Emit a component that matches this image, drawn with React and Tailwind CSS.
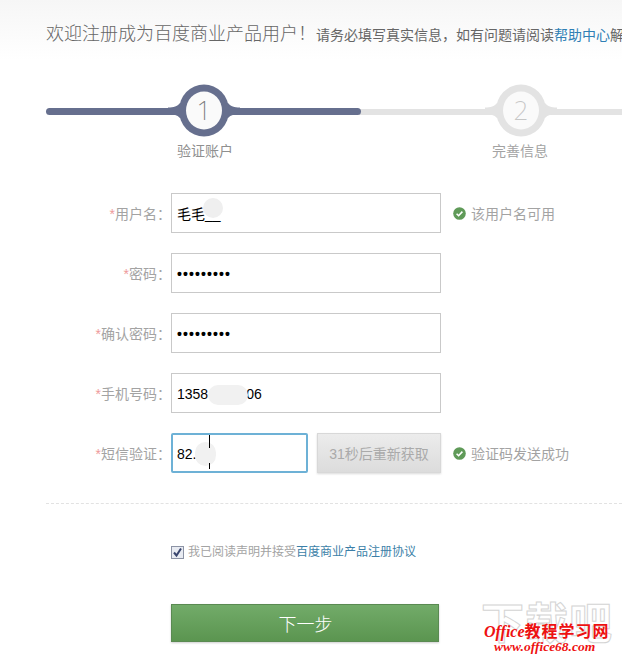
const cjk = { fontFamily: '"Liberation Sans","Noto Sans CJK SC",sans-serif' };
const latin = { fontFamily: '"Liberation Sans",sans-serif' };
const serif = { fontFamily: '"Liberation Serif",serif' };

function Check() {
  return (
    <svg width="13" height="13" viewBox="0 0 13 13" className="shrink-0">
      <circle cx="6.5" cy="6.5" r="6.3" fill="#5f9a58" />
      <path d="M3.6 6.7 5.6 8.7 9.4 4.6" fill="none" stroke="#fff" strokeWidth="1.6" />
    </svg>
  );
}

function Node({ n, color, text, left }) {
  return (
    <div className="absolute top-[-2px] w-[80px] h-[54px] flex items-center justify-center" style={{ left }}>
      <svg width="80" height="54" viewBox="0 0 80 54" className="absolute inset-0">
        <path d="M4 24.5 C 10 24.5 13 23.5 16 20 L 64 20 C 67 23.5 70 24.5 76 24.5 L 76 31 C 70 31 67 32 64 35 L 16 35 C 13 32 10 31 4 31 Z" fill={color} />
        <ellipse cx="40" cy="27.5" rx="25" ry="26" fill={color} />
        <ellipse cx="40" cy="27.5" rx="18" ry="19" fill="#fafafa" />
      </svg>
      <span className="relative text-[26px] font-extralight" style={{ color: text, fontFamily: '"Noto Sans",sans-serif' }}>{n}</span>
    </div>
  );
}

function Row({ label, children, note, mb = "mb-5" }) {
  return (
    <div className={`flex items-center h-10 ${mb}`}>
      <div className="w-[171px] shrink-0 pt-[2px] text-right text-[14px] text-[#a3a3a3] whitespace-nowrap">
        <span className="text-[#ee9a9a]">*</span>{label}：
      </div>
      <div className="flex items-center">{children}</div>
      {note && (
        <div className="ml-3 pt-[1px] flex items-center gap-[5px] text-[14px] text-[#a3a3a3] whitespace-nowrap">
          <Check /><span className="pt-px">{note}</span>
        </div>
      )}
    </div>
  );
}

function Field({ children, className = "w-[270px] border-[#c9c9c9]" }) {
  return (
    <div className={`relative h-10 border bg-white flex items-center pl-[5px] pt-[2px] text-[14px] text-black overflow-hidden ${className}`}>
      {children}
    </div>
  );
}

function Dots() {
  return <span className="text-[14px] tracking-[1.1px] font-bold" style={latin}>•••••••••</span>;
}

export default function App() {
  return (
    <div className="relative w-[622px] h-[661px] overflow-hidden bg-white bg-gradient-to-b from-[#f6f6f6] to-white to-[60px]" style={cjk}>
      <div className="pl-[46px] pt-[22px] h-[85px] flex items-baseline whitespace-nowrap overflow-hidden">
        <span className="text-[18px] leading-[24px] text-[#666] font-light">欢迎注册成为百度商业产品用户！</span>
        <span className="text-[14px] text-[#666]">请务必填写真实信息，如有问题请阅读<span className="text-[#2f7fb5]">帮助中心</span>解决</span>
      </div>

      <div className="relative h-[50px] ml-[46px]">
        <div className="flex items-center h-[50px] pt-[3px]">
          <div className="w-[315px] h-[7px] rounded-full bg-[#666f8e] relative z-10"></div>
          <div className="flex-1 h-[6px] bg-[#e3e3e3] -ml-1"></div>
        </div>
        <div className="absolute inset-0 z-20">
          <Node n="1" color="#666f8e" text="#7b7b7b" left={118} />
          <Node n="2" color="#e3e3e3" text="#c6c6c6" left={435} />
        </div>
      </div>

      <div className="relative h-[58px] text-[14px]">
        <span className="absolute left-[177px] top-[6px] text-[#8f8f8f]">验证账户</span>
        <span className="absolute left-[492px] top-[6px] text-[#a3a3a3]">完善信息</span>
      </div>

      <Row label="用户名" note="该用户名可用">
        <Field>
          <span>毛毛__</span>
          <div className="absolute left-[31px] top-[4px] w-5 h-5 rounded-full bg-[#efefef]"></div>
        </Field>
      </Row>
      <Row label="密码"><Field><Dots /></Field></Row>
      <Row label="确认密码"><Field><Dots /></Field></Row>
      <Row label="手机号码">
        <Field>
          <span style={latin}>1358</span>
          <span className="ml-[38px]" style={latin}>06</span>
          <div className="absolute left-[36px] top-[11px] w-[40px] h-[20px] rounded-full bg-[#f1f1f1]"></div>
        </Field>
      </Row>
      <Row label="短信验证" note="验证码发送成功" mb="mb-0">
        <Field className="w-[137px] h-10 border-2 border-[#6db1d6] rounded-[2px] !pl-1">
          <span style={latin}>82.</span>
          <div className="absolute left-[22px] top-[7px] w-[21px] h-[24px] rounded-full bg-[#f1f1f1]"></div>
          <div className="absolute left-[36px] top-0 w-px h-[13px] bg-black"></div>
          <div className="absolute left-[36px] top-[28px] w-px h-[6px] bg-black"></div>
        </Field>
        <div className="ml-[9px] w-[124px] h-10 pt-[2px] flex items-center justify-center border border-[#d8d8d8] bg-gradient-to-b from-[#ececec] to-[#dcdcdc] text-[14px] text-[#aaa] shadow-[0_1px_2px_rgba(0,0,0,0.15)] whitespace-nowrap">31秒后重新获取</div>
      </Row>

      <div className="ml-[46px] mt-[30px] border-t border-dashed border-[#e2e2e2]"></div>

      <div className="ml-[171px] mt-[41px] h-[14px] flex items-center text-[12px] text-[#a3a3a3] whitespace-nowrap">
        <div className="w-[13px] h-[13px] border border-[#8c93a5] bg-[#e8ebf2] flex items-center justify-center">
          <svg width="11" height="11" viewBox="0 0 11 11"><path d="M2 5.5 4.5 8.5 9 1.5" fill="none" stroke="#39456e" strokeWidth="2" /></svg>
        </div>
        <span className="ml-1">我已阅读声明并接受<span className="text-[#3c7fa8]">百度商业产品注册协议</span></span>
      </div>

      <div className="ml-[171px] mt-[45px] w-[268px] h-[38px] pt-[5px] pl-[1px] flex items-center justify-center border border-[#5a8a52] bg-gradient-to-b from-[#72ab69] to-[#5b9550] text-white text-[18px] font-light shadow-[0_1px_2px_rgba(0,0,0,0.2)]">下一步</div>

      <div className="absolute left-[480px] top-[596px] w-[136px] h-[62px] overflow-hidden">
        <div className="absolute left-[1px] top-[0px] text-[43px] leading-[56px] font-bold text-white [-webkit-text-stroke:1px_#d4d4d4] whitespace-nowrap tracking-[1px]">下载吧</div>
        <div className="absolute left-[4px] top-[27px] text-[16px] leading-[18px] font-bold text-[#ee1111] whitespace-nowrap tracking-[1px]"><span className="italic tracking-normal" style={serif}>Office</span>教程学习网</div>
        <div className="absolute left-[14px] top-[43px] text-[13.5px] leading-[16px] font-bold italic text-[#ee1111] whitespace-nowrap" style={serif}>www.office68.com</div>
      </div>
    </div>
  );
}
